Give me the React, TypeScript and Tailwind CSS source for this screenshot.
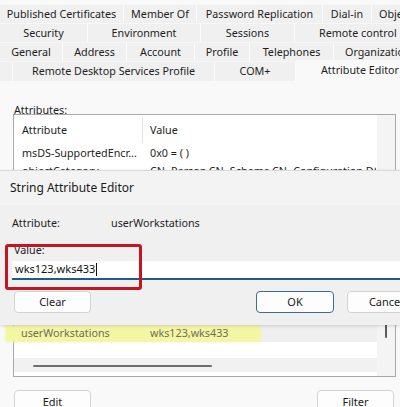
import React from 'react';

type Tab = { label: string };

const tabRows: { tabs: Tab[]; widths: string[] }[] = [
    {
        tabs: [
            { label: 'Published Certificates' },
            { label: 'Member Of' },
            { label: 'Password Replication' },
            { label: 'Dial-in' },
            { label: 'Object' },
        ],
        widths: ['w-[124px]', 'w-[73px]', 'w-[126px]', 'w-[49px]', 'flex-1 justify-start pl-[7px]'],
    },
    {
        tabs: [
            { label: 'Security' },
            { label: 'Environment' },
            { label: 'Sessions' },
            { label: 'Remote control' },
        ],
        widths: ['w-[88px]', 'w-[113px]', 'w-[94px]', 'flex-1 justify-start pl-[24px]'],
    },
    {
        tabs: [
            { label: 'General' },
            { label: 'Address' },
            { label: 'Account' },
            { label: 'Profile' },
            { label: 'Telephones' },
            { label: 'Organization' },
        ],
        widths: ['w-[63px]', 'w-[64px]', 'w-[68px]', 'w-[55px]', 'w-[84px]', 'flex-1 justify-start pl-[11px]'],
    },
];

// rows behind the dialog stay blank, only the first two peek out above it
const rows = [
    ['msDS-SupportedEncr...', '0x0 = ( )'],
    ['objectCategory', 'CN=Person,CN=Schema,CN=Configuration,DC=contoso,DC=com'],
    ['', ''],
    ['', ''],
    ['', ''],
    ['', ''],
    ['', ''],
    ['', ''],
    ['', ''],
    ['', ''],
];

const WinButton: React.FC<{ label: string; className?: string; primary?: boolean }> = ({ label, className, primary }) => (
    <div
        className={
            'shrink-0 flex items-center justify-center bg-[#fdfdfd] rounded-[4px] text-[11px] text-[#1b1b1b] ' +
            (primary ? 'border-[1.5px] border-[#3c6c98] ' : 'border border-[#d3d3d3] ') +
            (className ?? '')
        }
    >
        {label}
    </div>
);

const App: React.FC = () => {
    return (
        <div className="relative w-[400px] h-[407px] overflow-hidden bg-[#f9f9f9] font-['Noto_Sans',sans-serif] text-[#1e1e1e]">
            {/* tab strip */}
            <div className="pt-[5px]">
                {tabRows.map((row, ri) => (
                    <div key={ri} className="flex h-[19px] w-[440px] bg-[#f0f0f0] border-b border-[#f7f7f7]">
                        {row.tabs.map((t, ti) => (
                            <div
                                key={t.label}
                                className={
                                    'shrink-0 flex items-center justify-center whitespace-nowrap text-[10.75px] border-r border-[#fbfbfb] ' +
                                    row.widths[ti]
                                }
                            >
                                {t.label}
                            </div>
                        ))}
                    </div>
                ))}
                <div className="flex h-[19px] w-[440px] bg-[#f0f0f0]">
                    <div className="w-[13px] border-r border-[#fbfbfb]" />
                    <div className="w-[202px] flex items-center justify-center whitespace-nowrap text-[10.75px] border-r border-[#fbfbfb]">
                        Remote Desktop Services Profile
                    </div>
                    <div className="w-[81px] flex items-center justify-center whitespace-nowrap text-[10.75px] border-r border-[#fbfbfb]">
                        COM+
                    </div>
                    <div className="flex-1 -mt-[2px] h-[21px] bg-[#f9f9f9] flex items-start pt-[2px] pl-[25px] whitespace-nowrap text-[10.75px]">
                        Attribute Editor
                    </div>
                </div>
            </div>

            {/* attribute editor panel */}
            <div className="pt-[22px] px-[13px]">
                <div className="h-[11px] leading-[14px] text-[10.75px] pl-[1px]">Attributes:</div>
                <div className="w-[383px] h-[263px] border border-[#a9a9a9] bg-white flex">
                    <div className="flex-1 flex flex-col pt-[2px]">
                        <div className="flex h-[27px] text-[10.75px]">
                            <div className="w-[129px] pl-[8px] flex items-center border-r border-[#e3e3e3] my-[1px]">Attribute</div>
                            <div className="flex-1 pl-[7px] flex items-center">Value</div>
                        </div>
                        {rows.map(([a, v], i) => (
                            <div key={i} className="flex h-[18px] items-center text-[10.75px] whitespace-nowrap">
                                <div className="w-[129px] pl-[8px] overflow-hidden">{a}</div>
                                <div className="w-[233px] pl-[7px] overflow-hidden">{v}</div>
                            </div>
                        ))}
                        <div className="relative flex h-[18px] items-center bg-[#efefef] text-[10.75px] whitespace-nowrap">
                            <div className="absolute -left-[9px] top-[1px] w-[256px] h-[17px] bg-[#f3f6a2] rounded-[3px] blur-[1px]" />
                            <div className="relative w-[129px] pl-[7px] text-[#6f6f5c]">userWorkstations</div>
                            <div className="relative pl-[7px] text-[#6f6f5c]">wks123,wks433</div>
                        </div>
                        <div className="h-[16px]" />
                        <div className="relative h-[14px] bg-[#f1f1f1]">
                            <div className="absolute left-[19px] top-[7px] w-[179px] h-[2px] rounded-full bg-[#6e6e6e]" />
                        </div>
                    </div>
                    <div className="relative w-[18px] bg-[#f4f4f4]">
                        <div className="absolute left-[8px] top-[208px] w-[2px] h-[15px] rounded-full bg-[#5a5a5a]" />
                    </div>
                </div>
                <div className="flex mt-[13px]">
                    <WinButton label="Edit" className="w-[77px] h-[24px] ml-[1px]" />
                    <WinButton label="Filter" className="w-[77px] h-[24px] ml-[226px]" />
                </div>
            </div>

            {/* String Attribute Editor dialog on top */}
            <div className="absolute left-0 top-[170px] w-[400px] h-[155px] bg-[#f0f0f0] border-t border-[#dadada] shadow-[0_1px_3px_rgba(0,0,0,0.15)]">
                <div className="h-[34px] flex items-center pl-[10px] text-[12px] text-[#1a1a1a] bg-[#f3f3f3]">
                    String Attribute Editor
                </div>
                <div className="flex mt-[11px] h-[14px] items-center text-[10.75px]">
                    <div className="w-[111px] pl-[12px]">Attribute:</div>
                    <div>userWorkstations</div>
                </div>
                <div className="mt-[13px] h-[14px] flex items-center pl-[14px] text-[10.75px]">Value:</div>
                <div className="mt-[4px] ml-[12px] h-[19px] bg-white border-b-2 border-[#1f5a8a] flex items-center pl-[3px] text-[11px] text-[#111]">
                    wks123,wks433
                    <span className="inline-block w-px h-[13px] bg-[#111] ml-px" />
                </div>
                <div className="flex mt-[11px] w-[440px]">
                    <WinButton label="Clear" className="w-[77px] h-[22px] ml-[14px]" />
                    <WinButton label="OK" className="w-[78px] h-[22px] ml-[165px]" primary />
                    <WinButton label="Cancel" className="w-[78px] h-[22px] ml-[13px]" />
                </div>
                <div className="absolute left-[5px] top-[73px] w-[137px] h-[46px] border-[3px] border-[#c41620] rounded-[3px]" />
            </div>
        </div>
    );
};

export default App;
